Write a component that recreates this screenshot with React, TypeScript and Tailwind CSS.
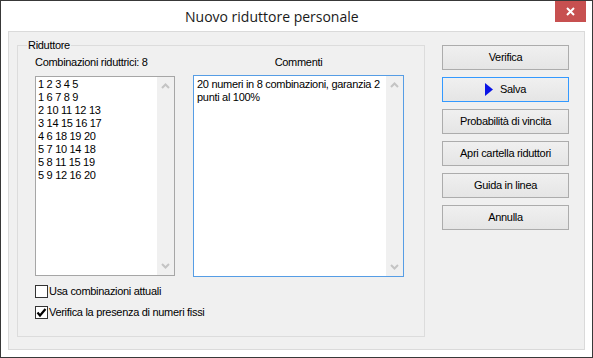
const combinazioni = [
  '1 2 3 4 5',
  '1 6 7 8 9',
  '2 10 11 12 13',
  '3 14 15 16 17',
  '4 6 18 19 20',
  '5 7 10 14 18',
  '5 8 11 15 19',
  '5 9 12 16 20',
];

const buttons = [
  'Verifica',
  'Salva',
  'Probabilità di vincita',
  'Apri cartella riduttori',
  'Guida in linea',
  'Annulla',
];

function Chevron({ down }: { down?: boolean }) {
  return (
    <svg width="9" height="6" viewBox="0 0 9 6" className="mx-auto">
      <polyline
        points={down ? '1,1 4.5,4.5 8,1' : '1,5 4.5,1.5 8,5'}
        fill="none"
        stroke="#c4c4c4"
        strokeWidth="2"
      />
    </svg>
  );
}

function ScrollBar() {
  return (
    <div className="flex w-[17px] shrink-0 flex-col justify-between bg-[#f0f0f0] py-[6px]">
      <Chevron />
      <Chevron down />
    </div>
  );
}

function CheckBox({ checked, label }: { checked?: boolean; label: string }) {
  return (
    <div className="flex h-[13px] items-center">
      <div className="h-[13px] w-[13px] shrink-0 border border-[#333333] bg-white">
        {checked && (
          <svg width="11" height="11" viewBox="0 0 11 11">
            <path
              d="M1.5 5.5 L4 8.5 L9.5 2"
              fill="none"
              stroke="#000"
              strokeWidth="2.2"
            />
          </svg>
        )}
      </div>
      <span className="ml-px leading-[13px]">{label}</span>
    </div>
  );
}

export default function App() {
  return (
    <div className="flex h-[358px] w-[593px] flex-col border border-[#383838] bg-white font-['Liberation_Sans',Arial,sans-serif] text-[11px] tracking-[-0.3px] text-black">
      {/* title bar */}
      <div className="flex h-[30px] shrink-0">
        <div className="self-center pl-[184px] font-['Open_Sans',sans-serif] text-[14px] tracking-normal text-[#1a1a1a]">
          Nuovo riduttore personale
        </div>
        <div className="mr-[6px] ml-auto flex h-[21px] w-[31px] items-center justify-center bg-[#c75050]">
          <svg width="9" height="9" viewBox="0 0 9 9">
            <path d="M1 1 L8 8 M8 1 L1 8" stroke="#fff" strokeWidth="2" />
          </svg>
        </div>
      </div>

      {/* client area */}
      <div className="mx-[7px] mb-[7px] flex flex-1 gap-[17px] border border-[#dadada] bg-[#f0f0f0] pt-[13px] pl-[8px]">
        <div className="relative h-[292px] w-[408px] shrink-0 border border-[#dcdcdc] pt-[10px] pl-[17px]">
          <span className="absolute top-[-7px] left-[9px] bg-[#f0f0f0] px-px leading-[13px]">
            Riduttore
          </span>

          <div className="flex gap-[18px]">
            <div className="w-[140px]">
              <div className="leading-[13px]">Combinazioni riduttrici: 8</div>
              <div className="mt-[7px] flex h-[200px] border border-[#a6a6a6] bg-white">
                <div className="flex-1 pt-px pl-[2px] leading-[13px]">
                  {combinazioni.map((c) => (
                    <div key={c}>{c}</div>
                  ))}
                </div>
                <ScrollBar />
              </div>
            </div>

            <div className="w-[211px]">
              <div className="text-center leading-[13px]">Commenti</div>
              <div className="mt-[6px] flex h-[202px] border border-[#569de5] bg-white">
                <div className="flex-1 pt-[2px] pl-[3px] leading-[13px]">
                  <div>20 numeri in 8 combinazioni, garanzia 2</div>
                  <div>punti al 100%</div>
                </div>
                <ScrollBar />
              </div>
            </div>
          </div>

          <div className="mt-[8px] flex flex-col gap-[8px]">
            <CheckBox label="Usa combinazioni attuali" />
            <CheckBox checked label="Verifica la presenza di numeri fissi" />
          </div>
        </div>

        <div className="flex w-[127px] flex-col gap-[7px]">
          {buttons.map((b) => (
            <div
              key={b}
              className={
                b === 'Salva'
                  ? 'flex h-[25px] items-center justify-center gap-[7px] border border-[#3399ff] bg-gradient-to-b from-[#f0f0f0] to-[#e5e5e5]'
                  : 'flex h-[25px] items-center justify-center border border-[#acacac] bg-gradient-to-b from-[#f0f0f0] to-[#e5e5e5]'
              }
            >
              {b === 'Salva' && (
                <svg width="8" height="13" viewBox="0 0 8 13">
                  <polygon points="0,0 8,6.5 0,13" fill="#0a14e6" />
                </svg>
              )}
              <span>{b}</span>
            </div>
          ))}
        </div>
      </div>
    </div>
  );
}
